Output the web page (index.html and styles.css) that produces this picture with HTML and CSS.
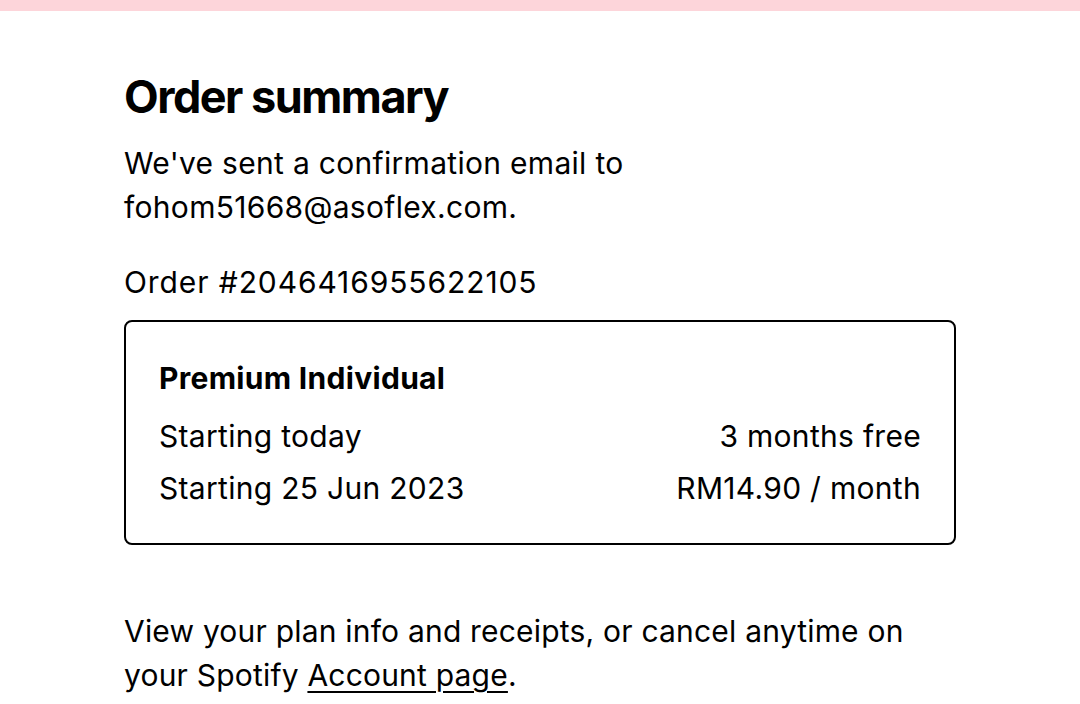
FILE: index.html
```html
<!DOCTYPE html>
<html lang="en">
<head>
    <meta charset="UTF-8">
    <meta name="viewport" content="width=device-width, initial-scale=1.0">
    <title>Order summary</title>
    <link rel="stylesheet" href="styles.css">
</head>
<body>

    <!-- Top banner strip -->
    <div class="top-strip"></div>

    <!-- Order summary -->
    <div class="content">
        <h1>Order summary</h1>
        <p class="sent">We've sent a confirmation email to<br>fohom51668@asoflex.com.</p>
        <p class="order-no">Order #2046416955622105</p>

        <div class="plan-box">
            <h2>Premium Individual</h2>
            <div class="plan-row">
                <span>Starting today</span>
                <span>3 months free</span>
            </div>
            <div class="plan-row">
                <span>Starting 25 Jun 2023</span>
                <span>RM14.90 / month</span>
            </div>
        </div>

        <p class="account-note">View your plan info and receipts, or cancel anytime on your Spotify <a href="#">Account page</a>.</p>
    </div>

</body>
</html>
```

FILE: styles.css
```css
/* General */
body, html {
    margin: 0;
    padding: 0;
    font-family: 'Inter', 'Liberation Sans', sans-serif;
    background-color: #fff;
    color: #000;
    overflow: hidden;
}

.top-strip {
    height: 11px;
    background-color: #fdd5da;
}

.content {
    padding: 0 124px;
    width: 832px;
}

h1 {
    font-size: 45px;
    font-weight: 700;
    letter-spacing: -1.5px;
    margin: 62px 0 0;
    line-height: 48px;
}

p {
    font-size: 30px;
    letter-spacing: 0.3px;
    line-height: 44px;
    margin: 0;
}

.sent {
    margin-top: 20px;
}

.order-no {
    margin-top: 31px;
    letter-spacing: 0.9px;
}

/* Plan box */
.plan-box {
    margin-top: 16px;
    border: 2px solid #000;
    border-radius: 8px;
    padding: 36px 33px 29px;
}

.plan-box h2 {
    font-size: 30px;
    font-weight: 700;
    letter-spacing: 0.3px;
    margin: 0 0 12px;
    line-height: 40px;
}

.plan-row {
    display: flex;
    justify-content: space-between;
    font-size: 30px;
    letter-spacing: 0.3px;
    line-height: 52px;
}

.account-note {
    margin-top: 64px;
    letter-spacing: 0.2px;
}

.account-note a {
    color: #000;
    text-decoration: underline;
    text-decoration-thickness: 2px;
    text-underline-offset: 5px;
}
```
